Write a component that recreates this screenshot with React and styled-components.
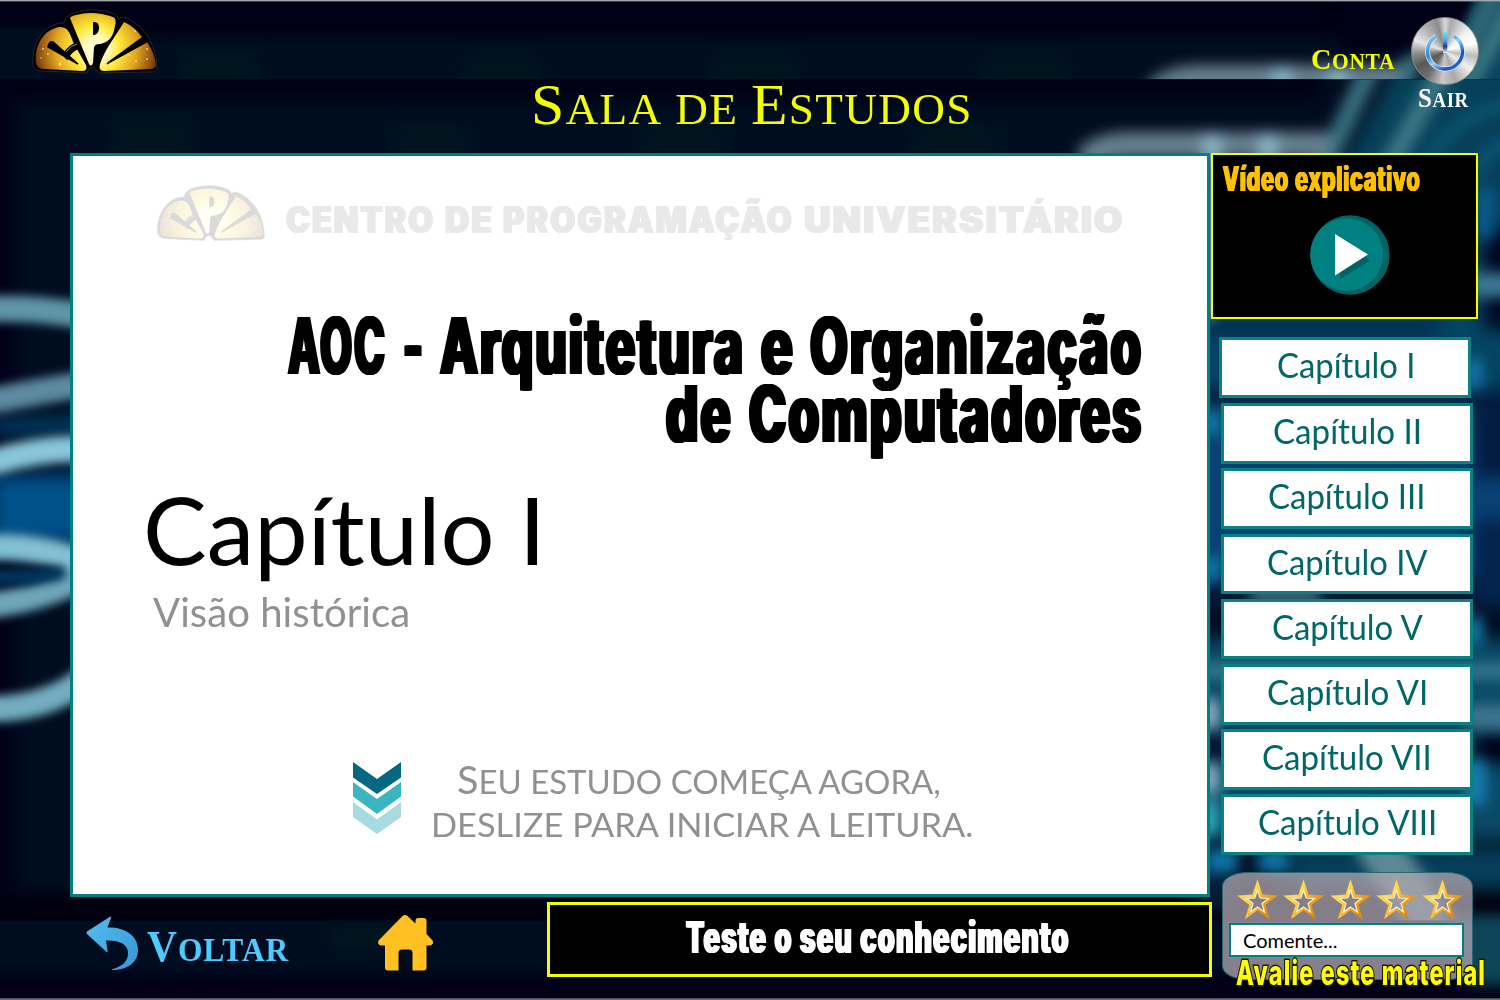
import React, { useLayoutEffect, useRef, useState } from "react";
import styled, { createGlobalStyle, css } from "styled-components";

const GlobalStyle = createGlobalStyle`
  *, *::before, *::after { box-sizing: border-box; }
  body { margin: 0; background: #000014; }
  button, input { font: inherit; margin: 0; }
`;

const serif = `"Liberation Serif", serif`;
const humanist = `Lato, "Liberation Sans", sans-serif`;
const heavy = `Inter, "Liberation Sans", sans-serif`;

/* ---------- text that fills a given width ---------- */

const FitBox = styled.span`
  display: block;
  flex: none;
  width: ${(p) => p.$w}px;
  height: ${(p) => p.$lh}px;
  font: ${(p) => p.$weight || 400} ${(p) => p.$size}px/${(p) => p.$lh}px ${(p) => p.$font};
  color: ${(p) => p.$color};
  letter-spacing: ${(p) => p.$track || 0}em;
  margin-top: ${(p) => p.$mt || 0}px;
  margin-left: ${(p) => p.$ml || 0}px;
  ${(p) =>
    p.$fat &&
    css`
      text-shadow: ${p.$fat}px 0 currentColor, -${p.$fat}px 0 currentColor,
        ${p.$fat / 2}px 0 currentColor, -${p.$fat / 2}px 0 currentColor;
    `}
`;

const FitInner = styled.span`
  display: inline-block;
  white-space: nowrap;
  transform-origin: 0 50%;
`;

function Fit({ children, ...rest }) {
  const ref = useRef(null);
  const [scale, setScale] = useState(1);
  useLayoutEffect(() => {
    const measure = () => setScale(rest.$w / ref.current.offsetWidth);
    measure();
    document.fonts.ready.then(measure);
  }, [rest.$w]);
  return (
    <FitBox {...rest}>
      <FitInner ref={ref} style={{ transform: `scaleX(${scale})` }}>
        {children}
      </FitInner>
    </FitBox>
  );
}

const Words = styled.span`
  display: flex;
  gap: ${(p) => p.$gap}px;
`;

/* A line whose words each have their own width: [text, width] pairs. */
function FitWords({ words, gap, ...rest }) {
  return (
    <Words $gap={gap}>
      {words.map(([text, w]) => (
        <Fit key={text} $w={w} {...rest}>
          {text}
        </Fit>
      ))}
    </Words>
  );
}

const Word = styled.span`
  display: inline-block;
  text-transform: uppercase;
  &::first-letter {
    font-size: ${(p) => p.$cap || 1.32}em;
  }
`;

/* ---------- page frame ---------- */

const Page = styled.div`
  position: relative;
  width: 1500px;
  height: 1000px;
  overflow: hidden;
  display: flex;
  flex-direction: column;
  background: #000014;
`;

const BackdropSvg = styled.svg`
  position: absolute;
  inset: 0;
`;

const Header = styled.header`
  position: relative;
  display: flex;
  align-items: flex-start;
  height: 153px;
  flex: none;
`;

const Main = styled.main`
  position: relative;
  display: flex;
  align-items: flex-start;
  height: 749px;
  padding-left: 70px;
  flex: none;
`;

const Footer = styled.footer`
  position: relative;
  display: flex;
  align-items: flex-start;
  padding-left: 86px;
`;

const HeaderLogo = styled.div`
  margin: 9px 0 0 31px;
  width: 128px;
  height: 66px;
`;

const Exit = styled.div`
  display: flex;
  flex-direction: column;
  align-items: center;
  width: 68px;
  margin: 17px 0 0 16px;
`;

const PowerDisc = styled.div`
  width: 68px;
  height: 68px;
  border-radius: 50%;
  border: 1px solid #8d8d8d;
  background: conic-gradient(
    #d8d8d8 0deg, #aaa 12deg, #f3f3f3 50deg, #fff 75deg, #bdbdbd 100deg, #f0f0f0 125deg,
    #a9a9a9 160deg, #c9c9c9 185deg, #6e6e6e 215deg, #585858 240deg, #8d8d8d 265deg,
    #e6e6e6 290deg, #b9b9b9 315deg, #8b8b8b 345deg, #d8d8d8 360deg
  );
`;

/* ---------- reading panel ---------- */

const Panel = styled.section`
  width: 1140px;
  height: 744px;
  flex: none;
  background: #fff;
  border: 3px solid #008080;
`;

const Letterhead = styled.div`
  display: flex;
  height: 57px;
  margin: 29px 0 0 83px;
`;

const Institution = styled.div`
  padding: 17px 0 0 20px;
`;

const Watermark = styled.div`
  width: 110px;
  height: 57px;
  opacity: 0.14;
`;

const Headline = styled.h1`
  margin: 69px 64px 0 0;
  display: flex;
  flex-direction: column;
  align-items: flex-end;
`;

const ChapterHead = styled.div`
  padding-left: 72px;
`;

const Hint = styled.div`
  display: flex;
  margin: 122px 0 0 280px;
`;

const HintText = styled.div`
  display: flex;
  flex-direction: column;
  align-items: center;
  margin: -1px 0 0 30px;
  width: 542px;
`;

/* ---------- sidebar ---------- */

const Sidebar = styled.aside`
  margin-left: 1px;
  width: 280px;
`;

const VideoCard = styled.div`
  width: 267px;
  height: 166px;
  border: 2.5px solid #f2ff00;
  background: #000;
  padding: 5px 0 0 10px;
  svg {
    display: block;
    margin: 17px 0 0 87px;
  }
`;

const Chapters = styled.nav`
  display: flex;
  flex-direction: column;
  gap: 4.6px;
  padding: 18px 0 0 10px;
`;

const ChapterButton = styled.button`
  display: flex;
  justify-content: center;
  width: 252px;
  height: 60.6px;
  padding: 1px 0 0;
  background: #fff;
  border: 3px solid #0a8282;
  &:first-child {
    margin: 0 0 1px -2px;
    padding-left: 3px;
  }
`;

const Rating = styled.section`
  width: 251px;
  height: 108px;
  margin: 17px 0 0 11px;
  border-radius: 26px / 14px;
  border: 1px solid #2a6670;
  background: rgba(173, 166, 175, 0.76);
  padding: 6px 0 0 6px;
`;

const Stars = styled.div`
  display: flex;
  gap: 5.3px;
  padding-left: 8px;
  height: 44px;
`;

const Comment = styled.input`
  display: block;
  width: 235px;
  height: 34px;
  border: 2.5px solid #008080;
  background: #fff;
  font: 20px ${humanist};
  color: #000;
  padding: 0 0 0 12px;
  outline: none;
  &::placeholder { color: #000; opacity: 1; }
`;

const RateLabel = styled.div`
  -webkit-text-stroke: 3px #1c1c00;
  paint-order: stroke fill;
`;

/* ---------- footer ---------- */

const Back = styled.div`
  display: flex;
  align-items: flex-start;
  padding-top: 14px;
`;

const Home = styled.div`
  margin: 12px 0 0 88px;
  height: 58px;
`;

const TestButton = styled.button`
  display: flex;
  justify-content: center;
  margin-left: 112.5px;
  width: 665px;
  height: 75px;
  padding: 8px 2px 0 0;
  border: 3px solid #f2ff00;
  background: #000;
`;

/* ---------- drawings ---------- */

function Logo({ id }) {
  return (
    <svg width="100%" height="100%" viewBox="0 0 128 66" preserveAspectRatio="none">
      <defs>
        <radialGradient id={id} gradientUnits="userSpaceOnUse" cx="65" cy="40" r="62">
          <stop offset="0" stopColor="#fffef0" />
          <stop offset=".2" stopColor="#fff9b8" />
          <stop offset=".38" stopColor="#ffe93c" />
          <stop offset=".66" stopColor="#e0a51f" />
          <stop offset=".88" stopColor="#9a5b12" />
          <stop offset="1" stopColor="#6a380f" />
        </radialGradient>
      </defs>
      <path
        d="M2 56C0 36 12 14 33 14C33 6 46 1 62 1C74 1 86 4 88 10C91 7 95 8 101 12C118 22 126 42 126 60C126 63 122 63 117 63L68 64L62 58L58 60L56 64L12 62Q4 62 2 56Z"
        fill="#000"
        stroke="#26262e"
        strokeWidth="1"
      />
      <g fill={`url(#${id})`}>
        <path d="M5 54C3 36 13 20 29 18C36 18 39 23 42 33L55 56Q57 62 51 62L14 60Q6 60 5 54Z" />
        <path d="M39 9Q40 7 45 6Q62 1 82 8Q86 10 84 17C82 29 77 35 65 35.500L63 38L62 54Q60 59 58 55Z" />
        <path d="M93 13Q104 18 111 28L74 55L116 33Q124 45 125 56Q125 60 119 60L73 62Q67 62 69 55C74 40 84 28 93 13Z" />
      </g>
      <path d="M62 13Q68.500 12 68 20Q67 26 62 26Z" fill="#000" />
      <path d="M18 35Q19 32 22 33L47 55L17 38Z M32 46Q38 36 46 34L48 39Q40 42 36 50Z" fill="#000" stroke="#000" strokeWidth="1.600" />
      <path d="M35 43Q40 36 46 35" fill="none" stroke="#bbb" strokeWidth=".7" />
      <path d="M114 28L76 55L116 33Z" fill="#000" stroke="#000" />
      <g fill="#ffe9a8" opacity=".75">
        <circle cx="29" cy="55" r="1.600" /><circle cx="12" cy="40" r="1" /><circle cx="17" cy="45" r="1" />
        <circle cx="10" cy="49" r=".8" /><circle cx="104" cy="22" r="1" /><circle cx="116" cy="40" r="1" />
        <circle cx="105" cy="52" r="1" /><circle cx="116" cy="50" r="1" /><circle cx="98" cy="46" r=".8" />
      </g>
    </svg>
  );
}

function PowerIcon() {
  return (
    <svg width="66" height="66" viewBox="0 0 66 66" fill="none">
      <defs>
        <linearGradient id="ring" x1="0" y1="0" x2="1" y2="1">
          <stop offset="0" stopColor="#8adcff" />
          <stop offset=".3" stopColor="#2f86d8" />
          <stop offset=".5" stopColor="#8fd6fb" />
          <stop offset=".75" stopColor="#1c4fc0" />
          <stop offset="1" stopColor="#2f7fe0" />
        </linearGradient>
        <linearGradient id="bar" x1="0" y1="0" x2="0" y2="1">
          <stop offset="0" stopColor="#6fe6ff" />
          <stop offset=".45" stopColor="#3aa9e8" />
          <stop offset=".7" stopColor="#163a86" />
          <stop offset="1" stopColor="#e6f6ff" />
        </linearGradient>
      </defs>
      <path d="M24 18.500A17.500 17.500 0 1 0 42 18.500" stroke="#e8f4ff" strokeWidth="5" opacity=".8" />
      <path d="M24 18.500A17.500 17.500 0 1 0 42 18.500" stroke="url(#ring)" strokeWidth="3.400" />
      <rect x="31" y="13.500" width="4.200" height="21.500" fill="url(#bar)" />
    </svg>
  );
}

function PlayIcon() {
  return (
    <svg width="80" height="80" viewBox="0 0 80 80">
      <circle cx="40" cy="40" r="39.700" fill="#006464" />
      <circle cx="36.600" cy="39.600" r="36.400" fill="#008080" />
      <path d="M30 64L60 46L52 38L30 50Z" fill="#006464" />
      <path d="M25 19L58 39.500L25 60.500Z" fill="#fff" />
    </svg>
  );
}

function StarIcon() {
  return (
    <svg width="41" height="41" viewBox="0 0 41 41">
      <defs>
        <linearGradient id="gold" x1="0" y1="0" x2="1" y2="1">
          <stop offset="0" stopColor="#f29a1a" />
          <stop offset=".35" stopColor="#ffd54a" />
          <stop offset=".6" stopColor="#f0a01c" />
          <stop offset="1" stopColor="#c97a10" />
        </linearGradient>
      </defs>
      <path
        fillRule="evenodd"
        fill="url(#gold)"
        d="M20.500 0L25.500 15.500L41 16.500L28.500 26L33 41L20.500 31.500L7.500 40.500L12.300 26L0 16.500L15.500 15.500Z M20.500 11L17.800 19L9.500 19.500L16 24.500L13.500 33L20.500 28L27.500 33L25 24.500L31.500 19.500L23.200 19Z"
      />
      <path d="M20.500 11L17.800 19L9.500 19.500L16 24.500L13.500 33L20.500 28L27.500 33L25 24.500L31.500 19.500L23.200 19Z" fill="none" stroke="#fff3c4" strokeWidth="1.200" />
      <path d="M20.500 3L16.800 17.300L3 17.500L14 26L9.500 38.500L20.500 29.500" fill="none" stroke="#ffe27a" strokeWidth=".7" />
    </svg>
  );
}

function BackArrow() {
  return (
    <svg width="53" height="55" viewBox="0 0 53 55">
      <defs>
        <linearGradient id="sky" x1="0" y1="0" x2="1" y2="1">
          <stop offset="0" stopColor="#55bdf2" />
          <stop offset="1" stopColor="#3597d0" />
        </linearGradient>
      </defs>
      <path
        fill="url(#sky)"
        d="M1 15.500L24 .8Q26 .5 25 2L21.500 11.500C38 11 52 19 52 34C52 47 41 54 26 54Q25 53 27 53C37 50 42 45 42 37C42 28 33 24 20 24.500L21.500 34.500Q22 37 20 35.500L1 18Q0 16.500 1 15.500Z"
      />
    </svg>
  );
}

function HomeIcon() {
  return (
    <svg width="57" height="58" viewBox="0 0 57 58">
      <path
        fill="#ffc022"
        d="M25.500 2Q28 0 30.500 2L38.500 9.500V7Q38.500 4 41.500 4H46.500Q49.500 4 49.500 7V20L55.500 26.500Q57 29 55 30.500Q54.500 31.500 52 31.500H49.500V53.500Q49.500 56.500 46.500 56.500H35.500V39Q35.500 35.500 32 35.500H25Q21.500 35.500 21.500 39V56.500H11Q8 56.500 8 53.500V31.500H4.500Q2 31.500 1.200 29.500Q.5 27.500 2 26Z"
      />
    </svg>
  );
}

function Chevrons() {
  return (
    <svg width="48" height="76" viewBox="0 0 48 76">
      <path d="M0 4L24 21L48 4V19.500L24 36L0 19.500Z" fill="#036880" />
      <path d="M0 24L24 41L48 24V38.500L24 56L0 38.500Z" fill="#3bb6c1" />
      <path d="M0 44L24 61.500L48 44V59L24 76L0 59Z" fill="#a7dae1" />
    </svg>
  );
}

function Circuit() {
  return (
    <>
      <rect width="1500" height="841" fill="#000d20" />
      <g filter="url(#wide)">
        <rect x="-20" y="-30" width="1340" height="50" fill="#010014" />
        <rect x="-20" y="-20" width="34" height="880" fill="#010018" />
        <rect x="-20" y="815" width="1560" height="50" fill="#00000e" />
        <rect x="110" y="40" width="80" height="40" fill="#00151f" />
        <rect x="390" y="45" width="80" height="40" fill="#00151f" />
        <rect x="640" y="45" width="90" height="40" fill="#00151f" />
        <rect x="910" y="45" width="90" height="40" fill="#00151f" />
        <path d="M1400 -20H1560V260H1180V90H1340Z" fill="#07405a" />
        <rect x="1190" y="160" width="350" height="200" fill="#054463" />
        <rect x="1190" y="240" width="250" height="14" fill="#01254a" />
        <rect x="1190" y="310" width="350" height="16" fill="#021c3c" />
        <rect x="1190" y="340" width="350" height="160" fill="#084275" />
        <rect x="1190" y="500" width="350" height="26" fill="#021c3c" />
        <rect x="1190" y="560" width="350" height="200" fill="#0a4a66" />
        <rect x="1484" y="150" width="40" height="100" fill="#00061e" />
        <rect x="1474" y="318" width="60" height="80" fill="#021b40" />
        <rect x="1474" y="440" width="60" height="90" fill="#03234c" />
        <rect x="1474" y="654" width="60" height="30" fill="#000018" />
        <rect x="1190" y="652" width="40" height="34" fill="#021230" />
        <rect x="1190" y="770" width="40" height="60" fill="#03203c" />
        <rect x="1290" y="770" width="240" height="40" fill="#06405a" />
      </g>
      <g filter="url(#soft)" fill="none">
        <path d="M1320 96L1384 -40" stroke="#37717f" strokeWidth="20" />
        <path d="M1376 110L1450 -20" stroke="#3b7886" strokeWidth="20" />
        <path d="M1085 82Q1100 66 1130 66H1330" stroke="#66808f" strokeWidth="26" />
        <path d="M1212 54V84M1268 54V84" stroke="#86b0be" strokeWidth="20" />
        <path d="M1405 130Q1440 30 1520 24" stroke="#0c5a74" strokeWidth="9" />
        <path d="M1450 150Q1470 70 1520 60" stroke="#0a5c80" strokeWidth="9" />
        <path d="M1485 110V160" stroke="#0a5f92" strokeWidth="16" />
        <path d="M1208 74V240" stroke="#7fa4b6" strokeWidth="12" />
        <path d="M1470 206H1520" stroke="#3c7c96" strokeWidth="24" />
        <path d="M1474 280V310" stroke="#1379ac" strokeWidth="16" />
        <path d="M1212 332V356M1212 478V502" stroke="#1483b4" strokeWidth="14" />
        <path d="M1474 538V566" stroke="#1683b6" strokeWidth="16" />
        <path d="M1250 517H1320" stroke="#8fc0d0" strokeWidth="7" />
        <path d="M1190 592H1520" stroke="#357890" strokeWidth="16" />
        <path d="M1465 638H1520" stroke="#3f7690" strokeWidth="24" />
        <path d="M1210 620V650M1210 684V714" stroke="#8fb4c4" strokeWidth="18" />
        <path d="M1476 682V726" stroke="#1780b2" strokeWidth="20" />
        <path d="M1210 722V756" stroke="#2cb4c0" strokeWidth="16" />
        <path d="M1206 782H1238M1258 782H1290" stroke="#0f74a4" strokeWidth="24" />
        <path d="M1360 740L1440 860" stroke="#5c8994" strokeWidth="44" />
      </g>
      <rect x="-10" y="395" width="110" height="70" fill="#00508a" filter="url(#wide)" />
      <rect x="-10" y="337" width="110" height="20" fill="#003a60" filter="url(#wide)" />
      <g filter="url(#curve)" fill="none" strokeWidth="26">
        <path d="M-10 230Q40 228 90 238" stroke="#5f95a6" />
        <path d="M-10 322Q40 312 90 304" stroke="#5c8aa0" />
        <path d="M-10 384Q40 368 90 370" stroke="#88c6da" />
        <path d="M-10 468Q45 467 90 486" stroke="#82c0d4" />
        <path d="M-10 526Q45 520 90 494" stroke="#6ea6b8" />
        <path d="M-10 630Q50 630 90 596" stroke="#74adc0" />
      </g>
      <path d="M-10 496H30L64 494L30 500H-10Z" stroke="#00365e" strokeWidth="12" filter="url(#curve)" />
    </>
  );
}

function Backdrop() {
  const area = {
    filterUnits: "userSpaceOnUse",
    x: -60,
    y: -60,
    width: 1640,
    height: 1100,
    colorInterpolationFilters: "sRGB",
  };
  return (
    <BackdropSvg width="1500" height="1000" viewBox="0 0 1500 1000" aria-hidden="true">
      <defs>
        <filter id="curve" {...area}><feGaussianBlur stdDeviation="5" /></filter>
        <filter id="soft" {...area}><feGaussianBlur stdDeviation="7" /></filter>
        <filter id="wide" {...area}><feGaussianBlur stdDeviation="9" /></filter>
        <clipPath id="mid"><rect y="79.500" width="1500" height="841" /></clipPath>
        <clipPath id="top"><rect y="0" width="1500" height="79.500" /></clipPath>
      </defs>
      <g clipPath="url(#top)">
        <rect width="1500" height="80" fill="#000d20" />
        <g transform="translate(70 12)"><Circuit /></g>
        <path d="M-20 -20H1480L1462 28H-20Z" fill="#010014" filter="url(#curve)" />
        <path d="M1340 -20H1486L1440 54L1340 50Z" fill="#010016" filter="url(#soft)" />
        <rect x="0" y="30" width="90" height="50" fill="#000d20" filter="url(#curve)" />
        <path d="M1450 90L1500 -20" stroke="#2f6876" strokeWidth="22" filter="url(#soft)" />
      </g>
      <g clipPath="url(#mid)">
        <g transform="translate(0 79)"><Circuit /></g>
      </g>
      <rect y="920.500" width="1500" height="80" fill="#000d20" />
      <g filter="url(#soft)">
        <rect x="-20" y="975" width="1540" height="50" fill="#010016" />
        <rect x="330" y="925" width="70" height="25" fill="#00151f" />
        <path d="M1440 915H1530V985H1470Z" fill="#0f4558" />
      </g>
      <rect width="1500" height="1.400" fill="#a3a5aa" />
      <rect y="998.300" width="1500" height="1.700" fill="#6d6d73" />
    </BackdropSvg>
  );
}

const chapters = [
  ["Capítulo I", 139], ["Capítulo II", 149], ["Capítulo III", 158], ["Capítulo IV", 161],
  ["Capítulo V", 151], ["Capítulo VI", 161], ["Capítulo VII", 170], ["Capítulo VIII", 179],
];

const headlineType = {
  $lh: 68, $size: 79, $font: heavy, $weight: 800, $fat: 3, $track: 0.045, $color: "#000",
};

export default function App() {
  return (
    <Page>
      <GlobalStyle />
      <Backdrop />
      <Header>
        <HeaderLogo><Logo id="goldA" /></HeaderLogo>
        <Fit $w={442} $lh={60} $mt={75} $ml={372} $size={44} $track={0.03} $font={serif} $color="#f4ff00">
          <Word>Sala</Word> <Word $cap={1}>de</Word> <Word>Estudos</Word>
        </Fit>
        <Fit $w={84} $lh={30} $mt={44} $ml={338} $size={22.5} $track={0.03} $font={serif} $weight={700} $color="#f4ff00">
          <Word>Conta</Word>
        </Fit>
        <Exit>
          <PowerDisc><PowerIcon /></PowerDisc>
          <Fit $w={51} $lh={26} $mt={0} $ml={-3} $size={20} $track={0.03} $font={serif} $weight={700} $color="#fff">
            <Word>Sair</Word>
          </Fit>
        </Exit>
      </Header>

      <Main>
        <Panel>
          <Letterhead>
            <Watermark><Logo id="goldB" /></Watermark>
            <Institution>
              <FitWords
                words={[["CENTRO", 149], ["DE", 49], ["PROGRAMAÇÃO", 291], ["UNIVERSITÁRIO", 321]]}
                gap={9.5}
                $lh={36} $size={37} $font={heavy} $weight={900} $fat={1} $track={0.06} $color="#e9e9e9"
              />
            </Institution>
          </Letterhead>
          <Headline>
            <FitWords
              words={[["AOC", 99], ["-", 22], ["Arquitetura", 305], ["e", 34], ["Organização", 333]]}
              gap={15.5}
              {...headlineType}
            />
            <FitWords words={[["de", 67], ["Computadores", 394]]} gap={16} {...headlineType} />
          </Headline>
          <ChapterHead>
            <Fit $w={403} $lh={100} $mt={32} $ml={-2} $size={94} $font={humanist} $color="#000">Capítulo I</Fit>
            <Fit $w={257} $lh={48} $mt={9} $ml={8} $size={40} $font={humanist} $color="#919191">Visão histórica</Fit>
          </ChapterHead>
          <Hint>
            <Chevrons />
            <HintText>
              <Fit $w={484} $lh={44} $ml={-6} $size={32} $font={humanist} $color="#919191">
                <Word $cap={1.2}>Seu estudo começa agora,</Word>
              </Fit>
              <Fit $w={543} $lh={44} $mt={2} $size={32} $font={humanist} $color="#919191">
                <Word $cap={1}>deslize para iniciar a leitura.</Word>
              </Fit>
            </HintText>
          </Hint>
        </Panel>

        <Sidebar>
          <VideoCard>
            <Fit $w={198} $lh={38} $size={34} $font={heavy} $weight={700} $fat={1.5} $track={0.05} $color="#ffc000">
              Vídeo explicativo
            </Fit>
            <PlayIcon />
          </VideoCard>
          <Chapters>
            {chapters.map(([name, w]) => (
              <ChapterButton key={name}>
                <Fit $w={w} $lh={48} $size={34} $font={humanist} $color="#006666">{name}</Fit>
              </ChapterButton>
            ))}
          </Chapters>
          <Rating>
            <Stars>{[0, 1, 2, 3, 4].map((n) => <StarIcon key={n} />)}</Stars>
            <Comment placeholder="Comente..." />
            <RateLabel>
              <Fit $w={250} $lh={32} $ml={7} $size={34} $font={heavy} $weight={800} $track={0.05} $color="#ff0">
                Avalie este material
              </Fit>
            </RateLabel>
          </Rating>
        </Sidebar>
      </Main>

      <Footer>
        <Back>
          <BackArrow />
          <Fit $w={142} $lh={44} $mt={8} $ml={8} $size={33} $track={0.03} $font={serif} $weight={700} $color="#4fcaff">
            <Word>Voltar</Word>
          </Fit>
        </Back>
        <Home><HomeIcon /></Home>
        <TestButton>
          <Fit $w={384} $lh={48} $size={44} $font={heavy} $weight={800} $fat={1.8} $track={0.05} $color="#fff">
            Teste o seu conhecimento
          </Fit>
        </TestButton>
      </Footer>
    </Page>
  );
}
